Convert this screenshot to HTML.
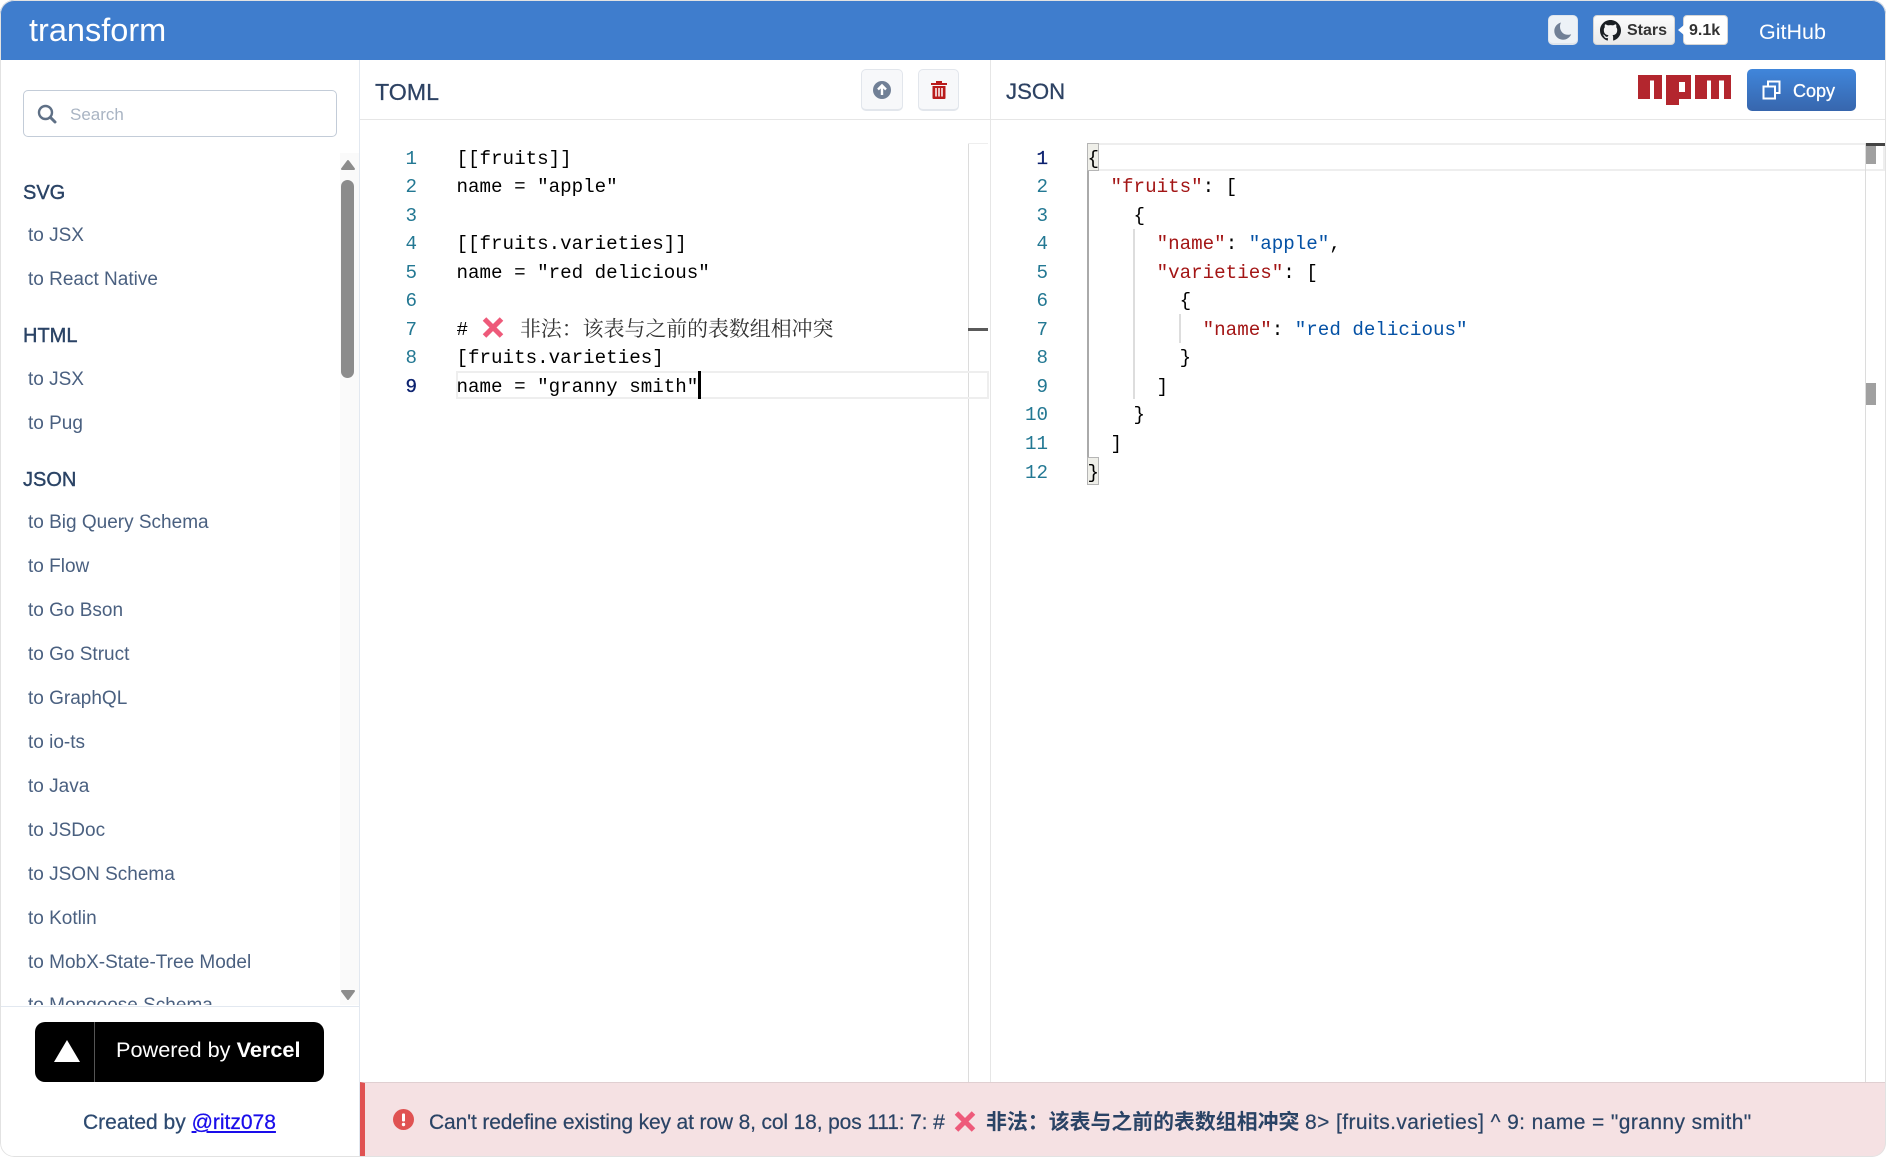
<!DOCTYPE html>
<html lang="en"><head><meta charset="utf-8"><title>transform</title>
<style>
html,body{margin:0;padding:0;background:#fff;width:1886px;height:1157px;overflow:hidden}
#app{position:absolute;left:0;top:0;width:1886px;height:1157px;overflow:hidden;border-radius:14px;background:#fff;font-family:"Liberation Sans","Noto Sans CJK SC",sans-serif}
#app div,#app span.a,#app svg,#app a.a{position:absolute}
#rim{left:0;top:0;width:1884px;height:1155px;border:1px solid #e2e2e2;border-radius:14px;pointer-events:none;z-index:9}
.t{white-space:pre}
.hd{left:0;top:0;width:1886px;height:60px;background:#3f7dcd}
.btn{box-sizing:border-box;background:#f7f8fa;border:1.5px solid #e2e6ec;border-bottom-width:2px;border-radius:5px}
.s{left:23px;font-size:20px;line-height:30px;color:#2a4365;-webkit-text-stroke:.4px #2a4365;white-space:pre}
.i{left:28px;font-size:19px;line-height:30px;color:#4a6080;white-space:pre}
.ln{font:19.2px/28.55px "Liberation Mono",monospace;color:#237893;text-align:right;width:40px;white-space:pre;margin-top:1.5px}
.c{font:19.2px/28.55px "Liberation Mono",monospace;color:#000;white-space:pre;margin-top:1.5px}
.k{color:#a31515}.v{color:#0451a5}
</style></head><body>
<div id="app">
<div class="hd"></div>
<div class="t" style="left:29px;top:8px;font-size:32.500px;line-height:44px;color:#fff">transform</div>

<div class="btn" style="left:1548px;top:15px;width:30px;height:30px;background:#edf2f7;border-color:#dfe5ec"></div>
<svg style="left:1554px;top:22px" width="18" height="18" viewBox="0 0 18 18"><path fill="#718096" d="M7 .5C3 1.500.3 5 .3 9c0 4.800 3.900 8.700 8.700 8.700 3.700 0 6.900-2.300 8.200-5.600-1 .5-2 .7-3.200.7-4.600 0-8-3.600-8-8.100 0-1.500.3-3 1-4.200z"/></svg>

<div style="left:1593px;top:15px;width:82px;height:30px;box-sizing:border-box;background:linear-gradient(#fcfcfc,#eaeaea);border:1px solid #d5d5d5;border-radius:4px"></div>
<svg style="left:1600px;top:20px" width="21" height="21" viewBox="0 0 16 16"><path fill="#1b1f23" d="M8 0C3.58 0 0 3.58 0 8c0 3.54 2.29 6.53 5.47 7.59.4.07.55-.17.55-.38 0-.19-.01-.82-.01-1.49-2.01.37-2.53-.49-2.69-.94-.09-.23-.48-.94-.82-1.13-.28-.15-.68-.52-.01-.53.63-.01 1.08.58 1.23.82.72 1.21 1.87.87 2.33.66.07-.52.28-.87.51-1.07-1.78-.2-3.64-.89-3.64-3.95 0-.87.31-1.59.82-2.15-.08-.2-.36-1.02.08-2.12 0 0 .67-.21 2.2.82.64-.18 1.32-.27 2-.27.68 0 1.36.09 2 .27 1.53-1.04 2.2-.82 2.2-.82.44 1.1.16 1.92.08 2.12.51.56.82 1.27.82 2.15 0 3.07-1.87 3.75-3.65 3.95.29.25.54.73.54 1.48 0 1.07-.01 1.93-.01 2.2 0 .21.15.46.55.38A8.013 8.013 0 0016 8c0-4.42-3.58-8-8-8z"/></svg>
<div class="t" style="left:1627px;top:16px;font-size:16px;line-height:30px;font-weight:700;color:#333">Stars</div>
<div style="left:1683px;top:15px;width:45px;height:30px;box-sizing:border-box;background:#fff;border:1px solid #d5d5d5;border-radius:4px"></div>
<div style="left:1678px;top:25px;width:0;height:0;border:5px solid transparent;border-left-width:0;border-right:6px solid #fff"></div>
<div class="t" style="left:1689px;top:16px;font-size:16px;line-height:30px;font-weight:700;color:#333">9.1k</div>
<div class="t" style="left:1759px;top:16px;font-size:21.500px;line-height:32px;color:#fff">GitHub</div>

<!-- sidebar -->
<div style="left:359px;top:60px;width:1px;height:1097px;background:#e2e8f0"></div>
<div style="left:23px;top:90px;width:314px;height:47px;box-sizing:border-box;border:1.500px solid #c3ccd8;border-radius:5px;background:#fff"></div>
<svg style="left:37px;top:104px" width="20" height="20" viewBox="0 0 20 20"><circle cx="8.500" cy="8.500" r="6.500" fill="none" stroke="#5f7086" stroke-width="2.400"/><path d="M13.500 13.500 18 18" stroke="#5f7086" stroke-width="3" stroke-linecap="round"/></svg>
<div class="t" style="left:70px;top:100px;font-size:17px;line-height:30px;color:#a9b4c3">Search</div>

<div style="left:0;top:153px;width:359px;height:852px;overflow:hidden">
<div style="left:340px;top:0;width:19px;height:852px;background:#fafafa"></div>
<div class="s" style="top:25px">SVG</div>
<div class="i" style="top:67.500px">to JSX</div>
<div class="i" style="top:111.500px">to React Native</div>
<div class="s" style="top:168px">HTML</div>
<div class="i" style="top:211.500px">to JSX</div>
<div class="i" style="top:255.500px">to Pug</div>
<div class="s" style="top:312px">JSON</div>
<div class="i" style="top:354.500px">to Big Query Schema</div>
<div class="i" style="top:398.500px">to Flow</div>
<div class="i" style="top:442.500px">to Go Bson</div>
<div class="i" style="top:486.500px">to Go Struct</div>
<div class="i" style="top:530.500px">to GraphQL</div>
<div class="i" style="top:574.500px">to io-ts</div>
<div class="i" style="top:618.500px">to Java</div>
<div class="i" style="top:662.500px">to JSDoc</div>
<div class="i" style="top:706.500px">to JSON Schema</div>
<div class="i" style="top:750.500px">to Kotlin</div>
<div class="i" style="top:794.500px">to MobX-State-Tree Model</div>
<div class="i" style="top:838px">to Mongoose Schema</div>
<div style="left:341px;top:27px;width:13px;height:198px;border-radius:7px;background:#8c8c8c"></div>
<svg style="left:340px;top:6px" width="16" height="12" viewBox="0 0 16 12"><path fill="#8c8c8c" stroke="#8c8c8c" stroke-linejoin="round" stroke-width="2" d="M8 2 14 10H2z"/></svg>
<svg style="left:340px;top:836px" width="16" height="12" viewBox="0 0 16 12"><path fill="#8c8c8c" stroke="#8c8c8c" stroke-linejoin="round" stroke-width="2" d="M8 10 14 2H2z"/></svg>
</div>
<div style="left:0;top:1006px;width:359px;height:1px;background:#e2e8f0"></div>

<div style="left:35px;top:1022px;width:289px;height:60px;background:#000;border-radius:10px"></div>
<div style="left:94px;top:1022px;width:1px;height:60px;background:#555"></div>
<svg style="left:54px;top:1040px" width="26" height="22" viewBox="0 0 26 22"><path fill="#fff" d="M13 0 26 22H0z"/></svg>
<div class="t" style="left:116px;top:1035px;font-size:21.700px;line-height:30px;color:#fff">Powered by <b>Vercel</b></div>
<div class="t" style="left:83px;top:1107px;font-size:21px;line-height:32px;color:#2d4a70;-webkit-text-stroke:.25px #2d4a70">Created by <a href="#" style="color:#1a0dea;-webkit-text-stroke:.25px #1a0dea">@ritz078</a></div>

<!-- TOML pane -->
<div style="left:360px;top:119px;width:1526px;height:1px;background:#e6e6e6"></div>
<div style="left:990px;top:60px;width:1px;height:1022px;background:#e6e6e6"></div>
<div class="t" style="left:375px;top:74px;font-size:23.200px;line-height:36px;color:#2d4263;-webkit-text-stroke:.25px #2d4263">TOML</div>

<div class="btn" style="left:861px;top:69px;width:42px;height:42px"></div>
<svg style="left:873px;top:81px" width="18" height="18" viewBox="0 0 18 18"><circle cx="9" cy="9" r="9" fill="#718096"/><path d="M9 14V5M5 8.500 9 4.500l4 4" fill="none" stroke="#fff" stroke-width="2.400"/></svg>
<div class="btn" style="left:918px;top:69px;width:41px;height:42px"></div>
<svg style="left:931px;top:81px" width="16" height="18" viewBox="0 0 16 18"><path fill="#b91c1c" d="M0 2h5V0h6v2h5v2H0zM1.500 5h13v12a1 1 0 0 1-1 1h-11a1 1 0 0 1-1-1z"/><path d="M5 7v8.500M8 7v8.500M11 7v8.500" stroke="#fff" stroke-width="1.500"/></svg>

<div style="left:968px;top:143px;width:1px;height:939px;background:#dcdcdc"></div>
<div style="left:968px;top:143px;width:20px;height:1px;background:#eee"></div>
<div style="left:968px;top:328px;width:20px;height:3px;background:#5a5a5a"></div>
<div style="left:456px;top:371px;width:533px;height:28px;box-sizing:border-box;border:2px solid #eee"></div>
<div style="left:698px;top:371px;width:2.500px;height:28px;background:#000"></div>

<div class="ln" style="left:377px;top:143px">1</div>
<div class="ln" style="left:377px;top:171.550px">2</div>
<div class="ln" style="left:377px;top:200.100px">3</div>
<div class="ln" style="left:377px;top:228.650px">4</div>
<div class="ln" style="left:377px;top:257.200px">5</div>
<div class="ln" style="left:377px;top:285.750px">6</div>
<div class="ln" style="left:377px;top:314.300px">7</div>
<div class="ln" style="left:377px;top:342.850px">8</div>
<div class="ln" style="left:377px;top:371.400px;color:#0b216f;-webkit-text-stroke:.3px #0b216f">9</div>

<div class="c" style="left:456.500px;top:143px">[[fruits]]</div>
<div class="c" style="left:456.500px;top:171.550px">name = "apple"</div>
<div class="c" style="left:456.500px;top:228.650px">[[fruits.varieties]]</div>
<div class="c" style="left:456.500px;top:257.200px">name = "red delicious"</div>
<div class="c" style="left:456.500px;top:314.300px">#</div>
<svg style="left:482px;top:317px" width="22" height="21" viewBox="0 0 22 21"><path d="M2.500 2 19.500 19M19.500 2 2.500 19" stroke="#ee5a7a" stroke-width="5"/></svg>
<div class="t" style="left:520px;top:313px;font-family:'Noto Serif CJK SC','Liberation Serif',serif;font-size:20.900px;line-height:28.550px;color:#333">非法&#xFF1A;该表与之前的表数组相冲突</div>
<div class="c" style="left:456.500px;top:342.850px">[fruits.varieties]</div>
<div class="c" style="left:456.500px;top:371.400px">name = "granny smith"</div>

<!-- JSON pane -->
<div class="t" style="left:1006px;top:74px;font-size:22.200px;line-height:36px;color:#2d4263;-webkit-text-stroke:.25px #2d4263">JSON</div>
<svg style="left:1638px;top:75px" width="94" height="30" viewBox="0 0 94 30"><path fill="#b3262e" fill-rule="evenodd" d="M0 0H24V24H16V5.500H12V24H0zM28 0H53V24H41V30H28zM41 7H47V17H41zM57 0H93V24H86V5.500H81V24H73V5.500H69V24H57z"/></svg>
<div style="left:1747px;top:69px;width:109px;height:42px;border-radius:5px;background:linear-gradient(#4086db,#3766ad)"></div>
<svg style="left:1762px;top:80px" width="19" height="20" viewBox="0 0 19 20"><path fill="none" stroke="#fff" stroke-width="2" d="M1.500 6.500h11.500v12H1.500zM6 6.500V1.500h11.500v11.500H13"/></svg>
<div class="t" style="left:1793px;top:76px;font-size:18px;line-height:30px;color:#fff;-webkit-text-stroke:.3px #fff">Copy</div>

<div style="left:1099px;top:143px;width:786px;height:28px;box-sizing:border-box;border:solid #eee;border-width:2.500px 2px 2.500px 0"></div>
<div style="left:1865px;top:143px;width:1px;height:939px;background:#dcdcdc"></div>
<div style="left:1866px;top:143px;width:19px;height:3px;background:#444"></div>
<div style="left:1866px;top:146px;width:10px;height:18px;background:#a0a0a0"></div>
<div style="left:1866px;top:383px;width:10px;height:22px;background:#a0a0a0"></div>
<div style="left:1087px;top:143px;width:12px;height:28px;box-sizing:border-box;background:#efefe9;border:1px solid #b5b5b5"></div>
<div style="left:1087px;top:457px;width:12px;height:28px;box-sizing:border-box;background:#efefe9;border:1px solid #b5b5b5"></div>
<div style="left:1087px;top:171px;width:2px;height:286px;background:#aaa"></div>
<div style="left:1133px;top:229px;width:2px;height:170px;background:#ddd"></div>
<div style="left:1179px;top:314px;width:2px;height:29px;background:#ddd"></div>

<div class="ln" style="left:1008px;top:143px;color:#0b216f;-webkit-text-stroke:.3px #0b216f">1</div>
<div class="ln" style="left:1008px;top:171.550px">2</div>
<div class="ln" style="left:1008px;top:200.100px">3</div>
<div class="ln" style="left:1008px;top:228.650px">4</div>
<div class="ln" style="left:1008px;top:257.200px">5</div>
<div class="ln" style="left:1008px;top:285.750px">6</div>
<div class="ln" style="left:1008px;top:314.300px">7</div>
<div class="ln" style="left:1008px;top:342.850px">8</div>
<div class="ln" style="left:1008px;top:371.400px">9</div>
<div class="ln" style="left:1008px;top:399.950px">10</div>
<div class="ln" style="left:1008px;top:428.500px">11</div>
<div class="ln" style="left:1008px;top:457.050px">12</div>

<div class="c" style="left:1087.500px;top:143px">{</div>
<div class="c" style="left:1087.500px;top:171.550px">  <span class="k">"fruits"</span>: [</div>
<div class="c" style="left:1087.500px;top:200.100px">    {</div>
<div class="c" style="left:1087.500px;top:228.650px">      <span class="k">"name"</span>: <span class="v">"apple"</span>,</div>
<div class="c" style="left:1087.500px;top:257.200px">      <span class="k">"varieties"</span>: [</div>
<div class="c" style="left:1087.500px;top:285.750px">        {</div>
<div class="c" style="left:1087.500px;top:314.300px">          <span class="k">"name"</span>: <span class="v">"red delicious"</span></div>
<div class="c" style="left:1087.500px;top:342.850px">        }</div>
<div class="c" style="left:1087.500px;top:371.400px">      ]</div>
<div class="c" style="left:1087.500px;top:399.950px">    }</div>
<div class="c" style="left:1087.500px;top:428.500px">  ]</div>
<div class="c" style="left:1087.500px;top:457.050px">}</div>

<!-- error bar -->
<div style="left:360px;top:1082px;width:1526px;height:75px;box-sizing:border-box;background:#f5e1e3;border-left:5px solid #e05252;border-top:1px solid #e0cfd1"></div>
<svg style="left:393px;top:1109px" width="21" height="21" viewBox="0 0 21 21"><circle cx="10.500" cy="10.500" r="10.500" fill="#e05252"/><rect x="9" y="4.500" width="3" height="8" rx="1" fill="#fff"/><circle cx="10.500" cy="15.500" r="1.700" fill="#fff"/></svg>
<div class="t" style="left:429px;top:1106.500px;font-size:21px;line-height:32px;letter-spacing:-.14px;color:#2a4365;-webkit-text-stroke:.2px #2a4365">Can't redefine existing key at row 8, col 18, pos 111: 7: #</div>
<svg style="left:954px;top:1111px" width="22" height="21" viewBox="0 0 22 21"><path d="M2.500 2 19.500 19M19.500 2 2.500 19" stroke="#ee5a7a" stroke-width="5"/></svg>
<div class="t" style="left:986px;top:1105px;font-family:'Noto Sans CJK SC',sans-serif;font-weight:700;font-size:20.900px;line-height:32px;color:#2a4365">非法&#xFF1A;该表与之前的表数组相冲突</div>
<div class="t" style="left:1305px;top:1106.500px;font-size:21px;line-height:32px;letter-spacing:.4px;color:#2a4365;-webkit-text-stroke:.2px #2a4365">8&gt; [fruits.varieties] ^ 9: name = "granny smith"</div>
<div id="rim"></div>
</div>
</body></html>
